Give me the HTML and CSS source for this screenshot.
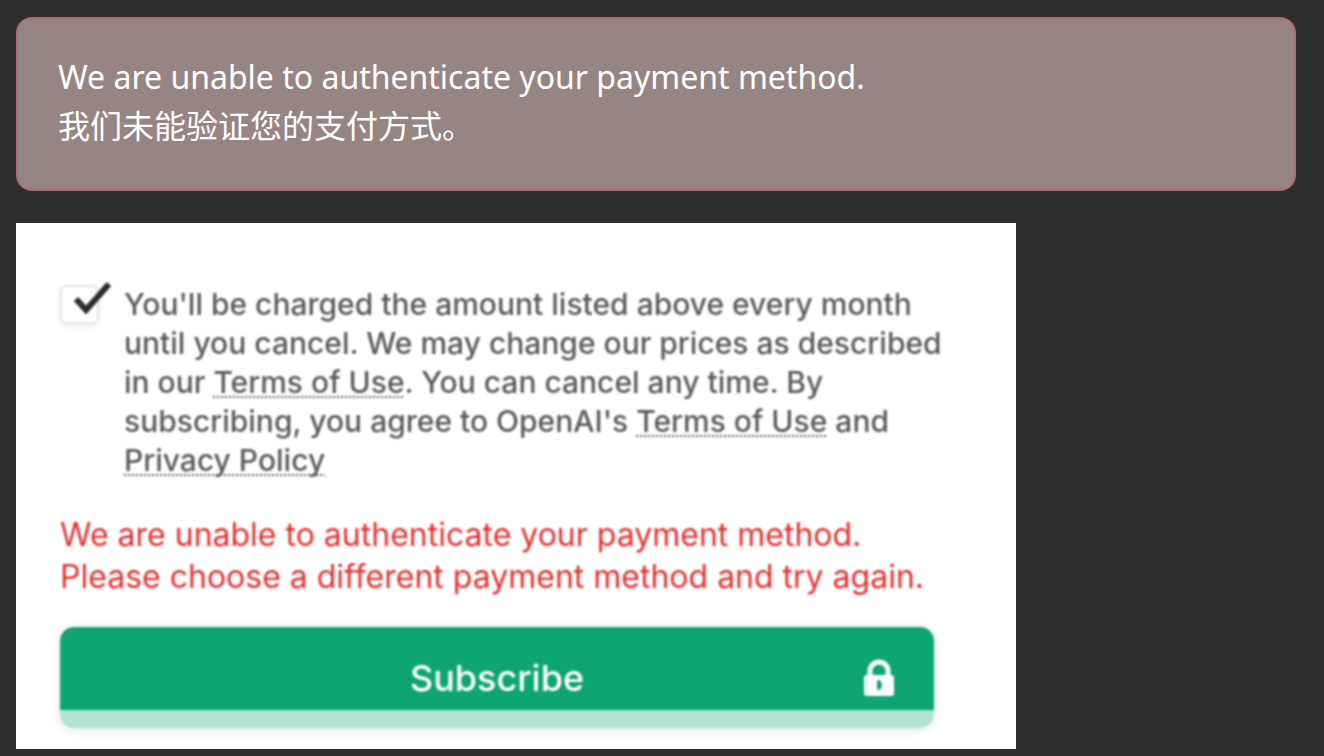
FILE: index.html
```html
<!DOCTYPE html>
<html lang="en">
<head>
<meta charset="utf-8">
<title>Payment method</title>
<link rel="stylesheet" href="styles.css">
</head>
<body>
<main class="page">
  <section class="alert" role="alert">
    <p>We are unable to authenticate your payment method.</p>
    <p lang="zh-CN">我们未能验证您的支付方式。</p>
  </section>
  <form class="card">
    <div class="card-content">
      <div class="consent">
        <span class="check">
          <input class="check-input" type="checkbox" id="agree" checked>
          <svg class="check-mark" viewBox="0 0 40 36" aria-hidden="true"><path d="M3 18L13 29L36 3" fill="none" stroke="#2c2c2c" stroke-width="6"/></svg>
        </span>
        <label class="terms" for="agree">You'll be charged the amount listed above every month until you cancel. We may change our prices as described in our <a href="#terms">Terms of Use</a>. You can cancel any time. By subscribing, you agree to OpenAI's <a href="#terms">Terms of Use</a> and <a href="#privacy">Privacy Policy</a></label>
      </div>
      <p class="error">We are unable to authenticate your payment method. Please choose a different payment method and try again.</p>
      <button class="subscribe" type="button">
        <span>Subscribe</span>
        <svg class="lock" viewBox="0 0 32 38" aria-hidden="true"><path d="M7 18V12a9 9 0 0 1 18 0v6" fill="none" stroke="#fff" stroke-width="5"/><path fill="#fff" fill-rule="evenodd" d="M4 16H28Q31 16 31 19V34Q31 37 28 37H4Q1 37 1 34V19Q1 16 4 16ZM14 21V31Q19 31 19 26T14 21Z"/></svg>
      </button>
    </div>
  </form>
</main>
</body>
</html>
```
FILE: styles.css
```css
* { box-sizing: border-box; }
body {
  margin: 0;
  background: #2e2e2e;
  font-family: "Noto Sans", "Noto Sans CJK SC", sans-serif;
}
p { margin: 0; }
.page {
  display: flex;
  flex-direction: column;
  gap: 32px;
  padding: 17px 28px 7px 16px;
}
.alert {
  padding: 33px 40px 39px;
  border: 2px solid #b06e74;
  border-radius: 16px;
  background: #978584;
  color: #fff;
  font-size: 32px;
  line-height: 49px;
}
.card {
  width: 100%;
  max-width: 1000px;
  padding: 62px 82px 21px 44px;
  background: #fff;
  font-family: Inter, sans-serif;
}
.card-content { filter: blur(1px); }
.consent {
  display: flex;
  gap: 25px;
  margin-right: -12px;
}
.check {
  position: relative;
  flex: none;
  width: 39px;
  height: 39px;
}
.check-input {
  appearance: none;
  display: block;
  width: 39px;
  height: 39px;
  margin: 0;
  border: 2px solid #e4e4e4;
  border-radius: 6px;
  box-shadow: 0 4px 6px #00000010;
}
.check-mark {
  position: absolute;
  top: -4px;
  left: 13px;
  width: 40px;
  height: 36px;
  pointer-events: none;
}
.terms {
  color: #5a5a5a;
  font-size: 30px;
  font-weight: 500;
  line-height: 39px;
}
.terms a {
  color: inherit;
  text-decoration: underline dotted 2px;
  text-decoration-skip-ink: none;
  text-underline-offset: 3px;
}
.error {
  margin-top: 34px;
  color: #e03030;
  font-size: 32px;
  line-height: 42px;
}
.subscribe {
  display: flex;
  position: relative;
  align-items: center;
  justify-content: center;
  width: 100%;
  height: 101px;
  margin-top: 29px;
  padding: 0;
  border: 0;
  border-radius: 14px;
  background: linear-gradient(to bottom, #0ea474 83px, #b0e3d4 83px);
  box-shadow: 0 2px 12px #00000018;
  color: #fff;
  font: 500 36px/44px Inter, sans-serif;
}
.lock {
  position: absolute;
  top: 32px;
  right: 39px;
  width: 32px;
  height: 38px;
}
```
